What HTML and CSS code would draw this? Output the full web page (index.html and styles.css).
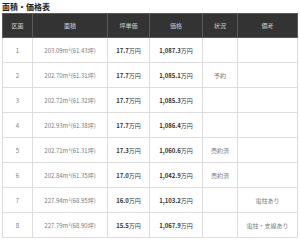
FILE: index.html
```html
<!doctype html>
<html lang="ja">
<head>
	<meta charset="utf-8">
	<title>面積・価格表</title>
	<link rel="stylesheet" href="styles.css">
</head>
<body>
	<h2 class="title">面積・価格表</h2>
	<table class="price-table">
		<colgroup>
			<col class="col-no">
			<col class="col-area">
			<col class="col-unit">
			<col class="col-price">
			<col class="col-status">
			<col class="col-note">
		</colgroup>
		<thead>
			<tr><th>区画</th><th>面積</th><th>坪単価</th><th>価格</th><th>状況</th><th>備考</th></tr>
		</thead>
		<tbody>
			<tr><td class="no">1</td><td class="area">203.09m²(61.43坪)</td><td><b>17.7</b>万円</td><td><b>1,087.3</b>万円</td><td class="status"></td><td class="note"></td></tr>
			<tr><td class="no">2</td><td class="area">202.70m²(61.31坪)</td><td><b>17.7</b>万円</td><td><b>1,085.1</b>万円</td><td class="status">予約</td><td class="note"></td></tr>
			<tr><td class="no">3</td><td class="area">202.72m²(61.32坪)</td><td><b>17.7</b>万円</td><td><b>1,085.3</b>万円</td><td class="status"></td><td class="note"></td></tr>
			<tr><td class="no">4</td><td class="area">202.93m²(61.38坪)</td><td><b>17.7</b>万円</td><td><b>1,086.4</b>万円</td><td class="status"></td><td class="note"></td></tr>
			<tr><td class="no">5</td><td class="area">202.71m²(61.31坪)</td><td><b>17.3</b>万円</td><td><b>1,060.6</b>万円</td><td class="status">売約済</td><td class="note"></td></tr>
			<tr><td class="no">6</td><td class="area">202.84m²(61.35坪)</td><td><b>17.0</b>万円</td><td><b>1,042.9</b>万円</td><td class="status">売約済</td><td class="note"></td></tr>
			<tr><td class="no">7</td><td class="area">227.94m²(68.95坪)</td><td><b>16.0</b>万円</td><td><b>1,103.2</b>万円</td><td class="status"></td><td class="note">電柱あり</td></tr>
			<tr><td class="no">8</td><td class="area">227.79m²(68.90坪)</td><td><b>15.5</b>万円</td><td><b>1,067.9</b>万円</td><td class="status"></td><td class="note">電柱・支線あり</td></tr>
		</tbody>
	</table>
</body>
</html>
```
FILE: styles.css
```css
* {
	font-family: "Noto Sans CJK JP", "Noto Sans", sans-serif;
}
html, body {
	margin: 0;
	padding: 0;
	background-color: #FFFFFF;
	color: #333333;
}
body {
	padding: 2px 3px 0 2px;
}
.title {
	margin: 0 0 2px 0;
	height: 9px;
	font-size: 8px;
	line-height: 9px;
	font-weight: bold;
	color: #222222;
}
.price-table {
	width: 295px;
	border-collapse: collapse;
	table-layout: fixed;
	font-size: 6px;
}
.col-no { width: 30px; }
.col-area { width: 75px; }
.col-unit { width: 42px; }
.col-price { width: 53px; }
.col-status { width: 35px; }
.col-note { width: 60px; }
.price-table th {
	height: 23px;
	padding: 0;
	background-color: #333333;
	color: #D0D0D0;
	font-weight: normal;
	border: 1px solid #5A5A5A;
	text-align: center;
}
.price-table td {
	height: 24px;
	padding: 0;
	border: 1px solid #DDDDDD;
	text-align: center;
	white-space: nowrap;
	color: #333333;
}
.price-table td b {
	font-weight: bold;
}
.price-table td.no,
.price-table td.area,
.price-table td.status,
.price-table td.note {
	color: #7A7A7A;
}
```
